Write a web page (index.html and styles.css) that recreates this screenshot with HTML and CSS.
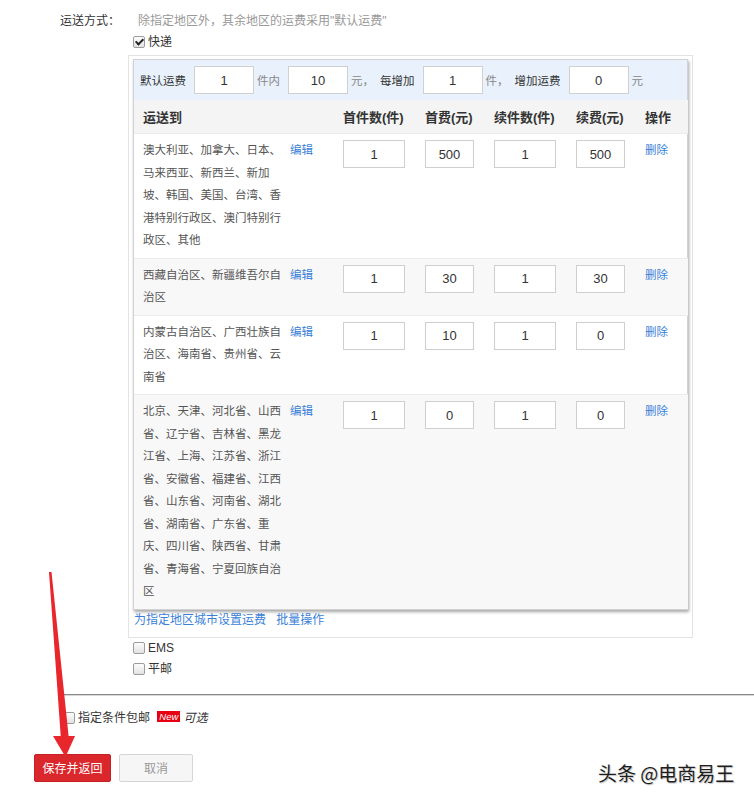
FILE: index.html
```html
<!DOCTYPE html>
<html lang="zh-CN">
<head>
  <meta charset="UTF-8" />
  <meta name="viewport" content="width=device-width, initial-scale=1.0" />
  <title>运费模板</title>
  <link rel="stylesheet" href="styles.css">
</head>
<body>

<div class="page">

  <!-- 运送方式 -->
  <div class="form-row">
    <div class="form-label">运送方式：</div>
    <div class="form-body">
      <div class="hint">除指定地区外，其余地区的运费采用"默认运费"</div>
      <label class="check-line"><input type="checkbox" class="chk" checked>快递</label>

      <div class="express-box">
        <div class="express-inner">
          <div class="default-fee">
            <span class="strong">默认运费</span>
            <input class="num" type="text" value="1">
            <span class="muted">件内</span>
            <input class="num" type="text" value="10">
            <span class="muted">元，</span>
            <span class="strong gap">每增加</span>
            <input class="num" type="text" value="1">
            <span class="muted">件，</span>
            <span class="strong gap">增加运费</span>
            <input class="num" type="text" value="0">
            <span class="muted">元</span>
          </div>

          <table class="area-table">
            <colgroup>
              <col style="width:199px">
              <col style="width:82px">
              <col style="width:69px">
              <col style="width:82px">
              <col style="width:69px">
              <col style="width:53px">
            </colgroup>
            <thead>
              <tr>
                <th class="c-area">运送到</th>
                <th>首件数(件)</th>
                <th>首费(元)</th>
                <th>续件数(件)</th>
                <th>续费(元)</th>
                <th>操作</th>
              </tr>
            </thead>
            <tbody>
              <tr>
                <td class="c-area"><div class="area"><span class="area-text">澳大利亚、加拿大、日本、马来西亚、新西兰、新加坡、韩国、美国、台湾、香港特别行政区、澳门特别行政区、其他</span><a class="link edit">编辑</a></div></td>
                <td><input class="cell-num wide" type="text" value="1"></td>
                <td><input class="cell-num" type="text" value="500"></td>
                <td><input class="cell-num wide" type="text" value="1"></td>
                <td><input class="cell-num" type="text" value="500"></td>
                <td><a class="link">删除</a></td>
              </tr>
              <tr class="grey">
                <td class="c-area"><div class="area"><span class="area-text">西藏自治区、新疆维吾尔自治区</span><a class="link edit">编辑</a></div></td>
                <td><input class="cell-num wide" type="text" value="1"></td>
                <td><input class="cell-num" type="text" value="30"></td>
                <td><input class="cell-num wide" type="text" value="1"></td>
                <td><input class="cell-num" type="text" value="30"></td>
                <td><a class="link">删除</a></td>
              </tr>
              <tr>
                <td class="c-area"><div class="area"><span class="area-text">内蒙古自治区、广西壮族自治区、海南省、贵州省、云南省</span><a class="link edit">编辑</a></div></td>
                <td><input class="cell-num wide" type="text" value="1"></td>
                <td><input class="cell-num" type="text" value="10"></td>
                <td><input class="cell-num wide" type="text" value="1"></td>
                <td><input class="cell-num" type="text" value="0"></td>
                <td><a class="link">删除</a></td>
              </tr>
              <tr class="grey">
                <td class="c-area"><div class="area"><span class="area-text">北京、天津、河北省、山西省、辽宁省、吉林省、黑龙江省、上海、江苏省、浙江省、安徽省、福建省、江西省、山东省、河南省、湖北省、湖南省、广东省、重庆、四川省、陕西省、甘肃省、青海省、宁夏回族自治区</span><a class="link edit">编辑</a></div></td>
                <td><input class="cell-num wide" type="text" value="1"></td>
                <td><input class="cell-num" type="text" value="0"></td>
                <td><input class="cell-num wide" type="text" value="1"></td>
                <td><input class="cell-num" type="text" value="0"></td>
                <td><a class="link">删除</a></td>
              </tr>
            </tbody>
          </table>
        </div>

        <div class="box-links">
          <a class="link">为指定地区城市设置运费</a>
          <a class="link">批量操作</a>
        </div>
      </div>

      <label class="check-line tall"><input type="checkbox" class="chk">EMS</label>
      <label class="check-line tall"><input type="checkbox" class="chk">平邮</label>
    </div>
  </div>

  <div class="divider"></div>

  <div class="free-row">
    <label><input type="checkbox" class="chk">指定条件包邮</label>
    <span class="badge-new">New</span><em class="optional">可选</em>
  </div>

  <div class="actions">
    <button class="btn btn-save">保存并返回</button>
    <button class="btn btn-cancel">取消</button>
  </div>

</div>

<!-- 标注用的红色箭头 -->
<svg class="arrow" width="754" height="800" viewBox="0 0 754 800">
  <polygon points="49,572 51.5,572 69,740 61,740" fill="#e8262b"/>
  <polygon points="53,736 75,736 65.5,757" fill="#e8262b"/>
</svg>

<div class="watermark">头条 @电商易王</div>

</body>
</html>
```

FILE: styles.css
```css
body {
  margin: 0;
  font-family: "Liberation Sans", "Noto Sans CJK SC", sans-serif;
  font-size: 12px;
  color: #333;
  background: #fff;
}

.page {
  padding-top: 12px;
}

.form-row {
  display: flex;
}

.form-label {
  width: 120px;
  text-align: right;
  line-height: 18px;
  color: #333;
}

.form-body {
  margin-left: 8px;
  width: 565px;
}

.hint {
  line-height: 18px;
  padding-left: 10px;
  color: #999;
}

.check-line {
  display: block;
  padding-left: 5px;
  margin-top: 3px;
  line-height: 18px;
  font-size: 12px;
}

.check-line.tall {
  margin-top: 0;
  line-height: 21px;
}

.chk {
  appearance: none;
  -webkit-appearance: none;
  box-sizing: border-box;
  width: 12px;
  height: 12px;
  margin: 0 3px 0 0;
  border: 1px solid #9c9c9c;
  border-radius: 2px;
  background: linear-gradient(#fdfdfd, #e2e2e2);
  vertical-align: -2px;
  position: relative;
}

.chk:checked::after {
  content: "";
  position: absolute;
  left: 3px;
  top: 0;
  width: 3px;
  height: 6px;
  border: solid #222;
  border-width: 0 2px 2px 0;
  transform: rotate(45deg);
}

/* 快递の枠 */
.express-box {
  margin-top: 4px;
  border: 1px solid #e3e3e3;
  padding: 3px 4px 8px 4px;
}

.express-inner {
  border: 1px solid #d2d2d2;
  box-shadow: 1px 2px 3px rgba(0,0,0,0.35);
}

.default-fee {
  display: flex;
  align-items: center;
  height: 40px;
  padding-left: 6px;
  background: #e8f1fc;
  font-size: 11.5px;
}

.default-fee .strong {
  color: #333;
}

.default-fee .gap {
  margin-left: 6px;
}

.default-fee .muted {
  color: #888;
}

.num {
  box-sizing: border-box;
  width: 60px;
  height: 28px;
  margin: 0 3px 0 8px;
  border: 1px solid #d0d0d0;
  background: #fff;
  text-align: center;
  font-family: "Liberation Sans", sans-serif;
  font-size: 13px;
  color: #333;
}

.area-table {
  width: 554px;
  border-collapse: collapse;
  table-layout: fixed;
}

.area-table th {
  height: 33px;
  padding: 0 0 0 10px;
  text-align: left;
  font-size: 13px;
  font-weight: bold;
  color: #333;
  background: #f4f4f4;
}

.area-table td {
  padding: 5px 0 6px 10px;
  vertical-align: top;
  border-top: 1px solid #ebebeb;
  line-height: 22.5px;
  font-size: 11.5px;
  color: #555;
}

.area-table th.c-area,
.area-table td.c-area {
  padding-left: 9px;
}

.area-table tr.grey td {
  background: #f8f8f8;
}

.area {
  display: flex;
  align-items: flex-start;
}

.area-text {
  width: 140px;
}

.edit {
  margin-left: 7px;
}

.cell-num {
  box-sizing: border-box;
  display: block;
  width: 49px;
  height: 28px;
  margin-top: 1px;
  border: 1px solid #cfcfcf;
  background: #fff;
  text-align: center;
  font-family: "Liberation Sans", sans-serif;
  font-size: 13px;
  color: #333;
}

.cell-num.wide {
  width: 62px;
}

.link {
  color: #3a7fd8;
  cursor: pointer;
}

.box-links {
  margin-top: 1px;
  padding-left: 1px;
  line-height: 18px;
  font-size: 12px;
}

.box-links .link + .link {
  margin-left: 7px;
}

.divider {
  margin: 14px 0 0 63px;
  border-top: 1px solid #8a8a8a;
  border-bottom: 1px solid #d8d8d8;
}

.free-row {
  margin-top: 12px;
  padding-left: 63px;
  line-height: 20px;
  font-size: 12px;
}

.badge-new {
  display: inline-block;
  margin-left: 4px;
  padding: 0 2px;
  height: 11px;
  line-height: 11px;
  background: #e60012;
  color: #fff;
  font-size: 9.5px;
  font-style: italic;
  vertical-align: 2px;
}

.optional {
  margin-left: 3px;
  font-style: italic;
}

.actions {
  display: flex;
  gap: 8px;
  margin-top: 26px;
  padding-left: 34px;
}

.btn {
  height: 28px;
  border-radius: 2px;
  font-family: "Liberation Sans", "Noto Sans CJK SC", sans-serif;
  font-size: 12px;
  cursor: pointer;
}

.btn-save {
  width: 77px;
  border: 1px solid #c81f24;
  background: #d9272c;
  color: #fff;
}

.btn-cancel {
  width: 74px;
  border: 1px solid #d6d6d6;
  background: #f6f6f6;
  color: #999;
}

.arrow {
  position: absolute;
  left: 0;
  top: 0;
  pointer-events: none;
}

.watermark {
  position: absolute;
  left: 598px;
  top: 761px;
  font-family: "Noto Sans CJK SC", sans-serif;
  font-size: 19px;
  line-height: 24px;
  color: #1e1e1e;
  text-shadow: 1px 1px 1px rgba(0,0,0,0.25);
}
```
